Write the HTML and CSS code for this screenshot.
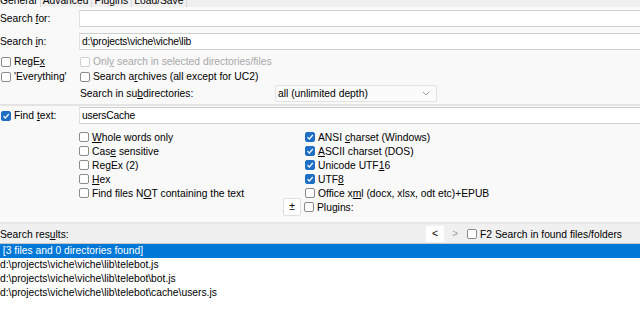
FILE: index.html
```html
<!DOCTYPE html>
<html lang="en">
<head>
    <meta charset="UTF-8">
    <title>Find Files</title>
    <link rel="stylesheet" href="styles.css">
</head>
<body>
    <div class="tabs">
        <span class="tab active">General</span>
        <span class="tab">Advanced</span>
        <span class="tab">Plugins</span>
        <span class="tab">Load/Save</span>
    </div>

    <div class="panel">
        <div class="field-row">
            <label class="label"><span>Search <u>f</u>or:</span></label>
            <div class="input"></div>
        </div>
        <div class="field-row">
            <label class="label"><span>Search <u>i</u>n:</span></label>
            <div class="input">d:\projects\viche\viche\lib</div>
        </div>

        <div class="check-row first">
            <div class="left-col"><span class="cb"></span><span>RegE<u>x</u></span></div>
            <div class="disabled"><span class="cb"></span><span>Onl<u>y</u> search in selected directories/files</span></div>
        </div>
        <div class="check-row">
            <div class="left-col"><span class="cb"></span><span>'Everything'</span></div>
            <div><span class="cb"></span><span>Search a<u>r</u>chives (all except for UC2)</span></div>
        </div>
        <div class="subdir-row">
            <span class="subdir-label">Search in su<u>b</u>directories:</span>
            <div class="select">
                <span>all (unlimited depth)</span>
                <svg width="8" height="5" viewBox="0 0 8 5"><path d="M1 1 L4 4 L7 1" fill="none" stroke="#999" stroke-width="1"/></svg>
            </div>
        </div>

        <div class="field-row find-row">
            <label class="label"><span class="cb on"><svg width="8" height="8" viewBox="0 0 8 8"><path d="M1.5 4.2 L3.3 6 L6.8 2" fill="none" stroke="#fff" stroke-width="1.2"/></svg></span><span>Find <u>t</u>ext:</span></label>
            <div class="input">usersCache</div>
        </div>

        <div class="options">
            <div class="opt-col">
                <div class="opt"><span class="cb"></span><span><u>W</u>hole words only</span></div>
                <div class="opt"><span class="cb"></span><span>Cas<u>e</u> sensitive</span></div>
                <div class="opt"><span class="cb"></span><span>RegEx (2)</span></div>
                <div class="opt"><span class="cb"></span><span><u>H</u>ex</span></div>
                <div class="opt"><span class="cb"></span><span>Find files N<u>O</u>T containing the text</span></div>
            </div>
            <div class="opt-col">
                <div class="opt"><span class="cb on"><svg width="8" height="8" viewBox="0 0 8 8"><path d="M1.5 4.2 L3.3 6 L6.8 2" fill="none" stroke="#fff" stroke-width="1.2"/></svg></span><span>ANSI <u>c</u>harset (Windows)</span></div>
                <div class="opt"><span class="cb on"><svg width="8" height="8" viewBox="0 0 8 8"><path d="M1.5 4.2 L3.3 6 L6.8 2" fill="none" stroke="#fff" stroke-width="1.2"/></svg></span><span><u>A</u>SCII charset (DOS)</span></div>
                <div class="opt"><span class="cb on"><svg width="8" height="8" viewBox="0 0 8 8"><path d="M1.5 4.2 L3.3 6 L6.8 2" fill="none" stroke="#fff" stroke-width="1.2"/></svg></span><span>Unicode UTF<u>1</u>6</span></div>
                <div class="opt"><span class="cb on"><svg width="8" height="8" viewBox="0 0 8 8"><path d="M1.5 4.2 L3.3 6 L6.8 2" fill="none" stroke="#fff" stroke-width="1.2"/></svg></span><span>UTF<u>8</u></span></div>
                <div class="opt"><span class="cb"></span><span>Office x<u>m</u>l (docx, xlsx, odt etc)+EPUB</span></div>
                <div class="opt plugins"><span class="plus-btn">±</span><span class="cb"></span><span>Plugins:</span></div>
            </div>
        </div>
    </div>

    <div class="results-bar">
        <span>Search res<u>u</u>lts:</span>
        <div class="results-tools">
            <span class="nav-btn">&lt;</span>
            <span class="nav-btn off">&gt;</span>
            <span class="cb"></span><span>F2 Search in found files/folders</span>
        </div>
    </div>

    <div class="results">
        <div class="result selected">&nbsp;[3 files and 0 directories found]</div>
        <div class="result">d:\projects\viche\viche\lib\telebot.js</div>
        <div class="result">d:\projects\viche\viche\lib\telebot\bot.js</div>
        <div class="result">d:\projects\viche\viche\lib\telebot\cache\users.js</div>
    </div>
</body>
</html>
```

FILE: styles.css
```css
body {
    margin: 0;
    width: 640px;
    height: 310px;
    overflow: hidden;
    font-family: "Liberation Sans", Arial, sans-serif;
    font-size: 10.3px;
    color: #000;
    background-color: #fff;
}
u {
    text-decoration-thickness: 1px;
    text-underline-offset: 1px;
}
.tabs {
    display: flex;
    align-items: flex-end;
    height: 7px;
    overflow: hidden;
    background-color: #f0f0f0;
}
.tab {
    line-height: 13px;
    padding: 0 3px 0 2px;
    border-right: 1px solid #d9d9d9;
}
.tab.active {
    background-color: #f9f9f9;
    padding-left: 0;
}
.panel {
    background-color: #f9f9f9;
    padding-top: 3px;
    border-bottom: 2px solid #e6e6e6;
    height: 212px;
}
.field-row {
    display: flex;
    align-items: center;
    height: 17px;
    margin-bottom: 6px;
}
.label {
    width: 79px;
    flex-shrink: 0;
    display: flex;
    align-items: center;
}
.input {
    flex: 1;
    height: 15px;
    line-height: 15px;
    background-color: #fff;
    border-top: 1px solid #cfcfcf;
    border-bottom: 1px solid #cfcfcf;
    border-left: 1px solid #e2e2e2;
    padding-left: 2px;
    letter-spacing: -0.2px;
}
.cb {
    display: inline-flex;
    align-items: center;
    justify-content: center;
    box-sizing: border-box;
    width: 10px;
    height: 10px;
    border: 1px solid #8c8c8c;
    border-radius: 2px;
    background-color: #fff;
    margin: 0 3px 0 1px;
    flex-shrink: 0;
}
.cb.on {
    background-color: #1f6fc5;
    border-color: #1f6fc5;
}
.check-row {
    display: flex;
    align-items: center;
    height: 15px;
}
.check-row.first {
    margin-top: -2px;
}
.check-row > div {
    display: flex;
    align-items: center;
}
.left-col {
    width: 79px;
}
.disabled {
    color: #a8a8a8;
}
.disabled .cb {
    border-color: #cfcfcf;
}
.subdir-row {
    display: flex;
    align-items: center;
    height: 18px;
    padding-left: 80px;
}
.subdir-label {
    width: 195px;
}
.select {
    display: flex;
    align-items: center;
    justify-content: space-between;
    box-sizing: border-box;
    width: 162px;
    height: 17px;
    padding: 0 6px 0 2px;
    background-color: #fbfbfb;
    border: 1px solid #e2e2e2;
    border-radius: 2px;
}
.find-row {
    border-top: 2px solid #e4e4e4;
    padding-top: 1px;
    margin-top: 2px;
}
.options {
    display: flex;
    padding-left: 78px;
    margin-top: 5px;
}
.opt-col {
    width: 226px;
}
.opt {
    display: flex;
    align-items: center;
    height: 14px;
}
.plugins {
    margin: -2px 0 0 -21px;
    height: 18px;
}
.plus-btn {
    box-sizing: border-box;
    width: 18px;
    height: 18px;
    line-height: 16px;
    text-align: center;
    background-color: #fff;
    border: 1px solid #e0e0e0;
    border-radius: 2px;
    margin-right: 2px;
}
.results-bar {
    display: flex;
    align-items: center;
    justify-content: space-between;
    height: 18px;
    padding-top: 1px;
    background-color: #f0f0f0;
    border-bottom: 1px solid #c8c8c8;
}
.results-tools {
    display: flex;
    align-items: center;
    padding-right: 18px;
}
.nav-btn {
    box-sizing: border-box;
    width: 18px;
    height: 16px;
    line-height: 16px;
    text-align: center;
    background-color: #fff;
    margin-right: 2px;
}
.nav-btn.off {
    background-color: transparent;
    color: #a0a0a0;
}
.results {
    background-color: #fff;
}
.result {
    height: 14px;
    line-height: 14px;
    padding-left: 0;
}
.result.selected {
    background-color: #0078d7;
    color: #fff;
}
```
